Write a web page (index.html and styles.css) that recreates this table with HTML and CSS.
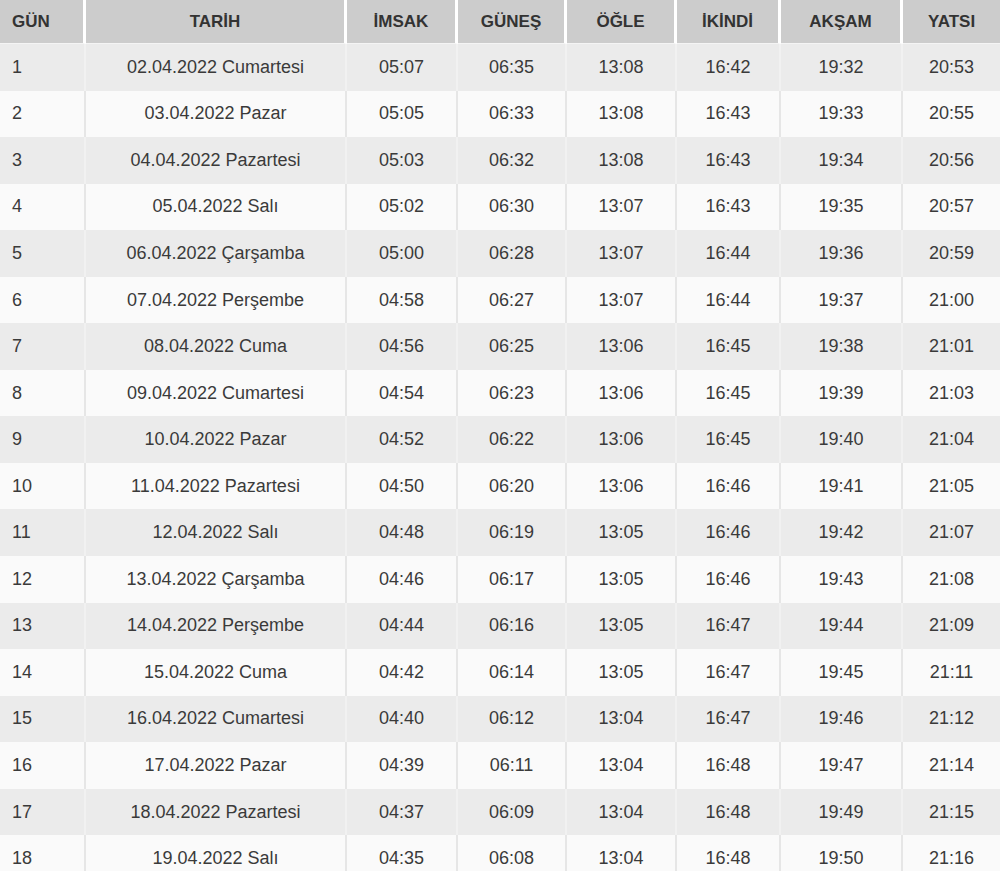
FILE: index.html
```html
<!DOCTYPE html>
<html lang="tr">
<head>
<meta charset="utf-8">
<title>İmsakiye</title>
<link rel="stylesheet" href="styles.css">
</head>
<body>
<table class="times">
  <colgroup>
    <col class="c-gun"><col class="c-tarih"><col class="c-imsak"><col class="c-gunes"><col class="c-ogle"><col class="c-ikindi"><col class="c-aksam"><col class="c-yatsi">
  </colgroup>
  <thead>
    <tr><th class="left">GÜN</th><th>TARİH</th><th>İMSAK</th><th>GÜNEŞ</th><th>ÖĞLE</th><th>İKİNDİ</th><th>AKŞAM</th><th class="last">YATSI</th></tr>
  </thead>
  <tbody>
    <tr><td class="left">1</td><td>02.04.2022 Cumartesi</td><td>05:07</td><td>06:35</td><td>13:08</td><td>16:42</td><td>19:32</td><td class="last">20:53</td></tr>
    <tr><td class="left">2</td><td>03.04.2022 Pazar</td><td>05:05</td><td>06:33</td><td>13:08</td><td>16:43</td><td>19:33</td><td class="last">20:55</td></tr>
    <tr><td class="left">3</td><td>04.04.2022 Pazartesi</td><td>05:03</td><td>06:32</td><td>13:08</td><td>16:43</td><td>19:34</td><td class="last">20:56</td></tr>
    <tr><td class="left">4</td><td>05.04.2022 Salı</td><td>05:02</td><td>06:30</td><td>13:07</td><td>16:43</td><td>19:35</td><td class="last">20:57</td></tr>
    <tr><td class="left">5</td><td>06.04.2022 Çarşamba</td><td>05:00</td><td>06:28</td><td>13:07</td><td>16:44</td><td>19:36</td><td class="last">20:59</td></tr>
    <tr><td class="left">6</td><td>07.04.2022 Perşembe</td><td>04:58</td><td>06:27</td><td>13:07</td><td>16:44</td><td>19:37</td><td class="last">21:00</td></tr>
    <tr><td class="left">7</td><td>08.04.2022 Cuma</td><td>04:56</td><td>06:25</td><td>13:06</td><td>16:45</td><td>19:38</td><td class="last">21:01</td></tr>
    <tr><td class="left">8</td><td>09.04.2022 Cumartesi</td><td>04:54</td><td>06:23</td><td>13:06</td><td>16:45</td><td>19:39</td><td class="last">21:03</td></tr>
    <tr><td class="left">9</td><td>10.04.2022 Pazar</td><td>04:52</td><td>06:22</td><td>13:06</td><td>16:45</td><td>19:40</td><td class="last">21:04</td></tr>
    <tr><td class="left">10</td><td>11.04.2022 Pazartesi</td><td>04:50</td><td>06:20</td><td>13:06</td><td>16:46</td><td>19:41</td><td class="last">21:05</td></tr>
    <tr><td class="left">11</td><td>12.04.2022 Salı</td><td>04:48</td><td>06:19</td><td>13:05</td><td>16:46</td><td>19:42</td><td class="last">21:07</td></tr>
    <tr><td class="left">12</td><td>13.04.2022 Çarşamba</td><td>04:46</td><td>06:17</td><td>13:05</td><td>16:46</td><td>19:43</td><td class="last">21:08</td></tr>
    <tr><td class="left">13</td><td>14.04.2022 Perşembe</td><td>04:44</td><td>06:16</td><td>13:05</td><td>16:47</td><td>19:44</td><td class="last">21:09</td></tr>
    <tr><td class="left">14</td><td>15.04.2022 Cuma</td><td>04:42</td><td>06:14</td><td>13:05</td><td>16:47</td><td>19:45</td><td class="last">21:11</td></tr>
    <tr><td class="left">15</td><td>16.04.2022 Cumartesi</td><td>04:40</td><td>06:12</td><td>13:04</td><td>16:47</td><td>19:46</td><td class="last">21:12</td></tr>
    <tr><td class="left">16</td><td>17.04.2022 Pazar</td><td>04:39</td><td>06:11</td><td>13:04</td><td>16:48</td><td>19:47</td><td class="last">21:14</td></tr>
    <tr><td class="left">17</td><td>18.04.2022 Pazartesi</td><td>04:37</td><td>06:09</td><td>13:04</td><td>16:48</td><td>19:49</td><td class="last">21:15</td></tr>
    <tr><td class="left">18</td><td>19.04.2022 Salı</td><td>04:35</td><td>06:08</td><td>13:04</td><td>16:48</td><td>19:50</td><td class="last">21:16</td></tr>
  </tbody>
</table>
</body>
</html>
```

FILE: styles.css
```css
html, body {
  margin: 0;
  padding: 0;
  background: #ffffff;
}

body {
  font-family: "Liberation Sans", Arial, sans-serif;
  color: #333333;
  overflow: hidden;
}

.times {
  width: 1000px;
  table-layout: fixed;
  border-collapse: separate;
  border-spacing: 0;
}

.c-gun { width: 86px; }
.c-tarih { width: 261px; }
.c-imsak { width: 111px; }
.c-gunes { width: 109px; }
.c-ogle { width: 110px; }
.c-ikindi { width: 104px; }
.c-aksam { width: 122px; }
.c-yatsi { width: 97px; }

.times th,
.times td {
  box-sizing: border-box;
  text-align: center;
  padding: 0 4px;
  white-space: nowrap;
  overflow: hidden;
}

.times th {
  height: 44px;
  background: #cccccc;
  color: #333333;
  font-size: 17px;
  font-weight: bold;
  border-right: 3px solid #ffffff;
  border-bottom: 1px solid #f4f4f4;
}

.times td {
  height: 46.55px;
  font-size: 18px;
  color: #3a3a3a;
  border-right: 2px solid #e6e6e6;
  background: #fafafa;
}

.times tbody tr:nth-child(odd) td {
  background: #ebebeb;
  border-right-color: #f1f1f1;
}

.times .left {
  text-align: left;
  padding-left: 12px;
}

.times .last {
  border-right: none;
}
```
